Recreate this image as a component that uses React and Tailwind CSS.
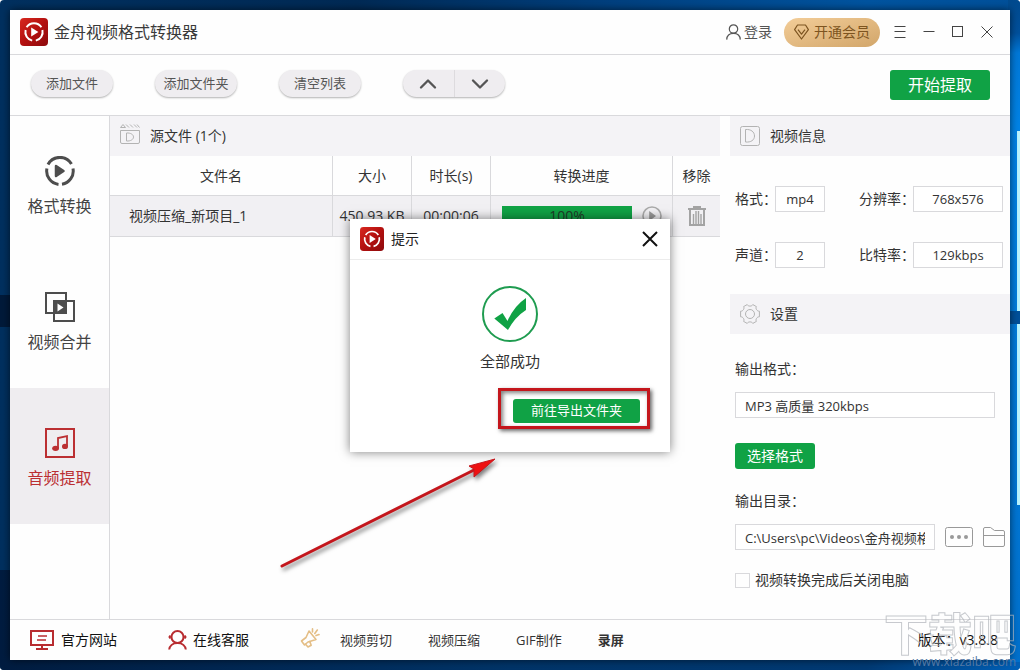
import { useState } from "react";
import { ChevronUp, ChevronDown } from "lucide-react";

const files = [
  { id: 1, name: "视频压缩_新项目_1", size: "450.93 KB", duration: "00:00:06", progress: 100 },
];

const Logo = ({ className }) => (
  <svg viewBox="0 0 28 28" className={className} aria-hidden="true">
    <defs>
      <linearGradient id="logo-bg" x1="0" y1="0" x2="1" y2="1">
        <stop offset="0" stopColor="#d8281f" />
        <stop offset="0.5" stopColor="#b3100f" />
        <stop offset="1" stopColor="#8c0a0d" />
      </linearGradient>
    </defs>
    <rect width="28" height="28" rx="4" fill="url(#logo-bg)" />
    <g fill="none" stroke="#fff" strokeWidth="2">
      <path d="M6.6 9.3A8.8 8.8 0 0 1 21.4 9.3" />
      <path d="M22.4 12A8.8 8.8 0 0 1 15.8 22.6" />
      <path d="M12.2 22.6A8.8 8.8 0 0 1 5.6 12" />
    </g>
    <path d="M11.2 9.4L18.4 14L11.2 18.6Z" fill="#fff" />
  </svg>
);

const ConvertIcon = () => (
  <svg width="30" height="30" viewBox="0 0 30 30" fill="none" stroke="#4d4d4d" strokeWidth="3" aria-hidden="true">
    <path d="M3 8.5A13.5 13.5 0 0 1 26.5 8" />
    <path d="M28 12.5A13.5 13.5 0 0 1 17 28.3" />
    <path d="M13.5 28.4A13.5 13.5 0 0 1 1.9 12.5" />
    <path d="M11 10L18.5 15L11 20Z" fill="#4d4d4d" strokeWidth="2.5" strokeLinejoin="round" />
  </svg>
);

const MergeIcon = () => (
  <svg width="30" height="30" viewBox="0 0 30 30" aria-hidden="true">
    <rect x="1" y="1" width="20" height="20" fill="none" stroke="#4d4d4d" strokeWidth="2" />
    <rect x="9" y="9" width="20" height="20" fill="none" stroke="#4d4d4d" strokeWidth="2" />
    <rect x="9" y="9" width="13" height="13" fill="#4d4d4d" />
    <path d="M12.5 11.5L18.5 15.5L12.5 19.5Z" fill="#fff" />
  </svg>
);

const MusicIcon = () => (
  <svg width="30" height="30" viewBox="0 0 30 30" aria-hidden="true">
    <rect x="1" y="1" width="28" height="28" fill="none" stroke="#bb2f32" strokeWidth="2" />
    <path d="M13 20V10L22 8.2V18" fill="none" stroke="#bb2f32" strokeWidth="1.8" />
    <ellipse cx="10.6" cy="20.3" rx="3.4" ry="2.6" fill="#bb2f32" />
    <ellipse cx="20" cy="18.4" rx="3" ry="2.6" fill="#bb2f32" />
  </svg>
);

const tabs = [
  { key: "convert", label: "格式转换", icon: <ConvertIcon /> },
  { key: "merge", label: "视频合并", icon: <MergeIcon /> },
  { key: "audio", label: "音频提取", icon: <MusicIcon /> },
];

const Wallpaper = () => (
  <svg
    className="absolute inset-0 w-full h-full"
    viewBox="0 0 1020 670"
    preserveAspectRatio="none"
    aria-hidden="true"
  >
    <defs>
      <linearGradient id="sky" x1="0" y1="0" x2="1" y2="0">
        <stop offset="0" stopColor="#00305f" />
        <stop offset="0.35" stopColor="#002a55" />
        <stop offset="0.6" stopColor="#00407f" />
        <stop offset="0.85" stopColor="#0054a0" />
        <stop offset="1" stopColor="#00509a" />
      </linearGradient>
      <linearGradient id="ground" x1="0" y1="0" x2="1" y2="0">
        <stop offset="0" stopColor="#001c40" />
        <stop offset="0.5" stopColor="#003468" />
        <stop offset="0.85" stopColor="#003a74" />
        <stop offset="1" stopColor="#0060b8" />
      </linearGradient>
      <linearGradient id="edge" x1="0" y1="0" x2="0" y2="1">
        <stop offset="0" stopColor="#004a8e" />
        <stop offset="0.05" stopColor="#00509c" />
        <stop offset="0.08" stopColor="#0078d8" />
        <stop offset="0.19" stopColor="#0083e6" />
        <stop offset="1" stopColor="#0070cc" />
      </linearGradient>
    </defs>
    <rect width="1020" height="670" fill="url(#sky)" />
    <rect y="295" width="12" height="32" fill="#001a3a" />
    <rect y="570" width="1020" height="100" fill="url(#ground)" />
    <rect x="1008" y="0" width="12" height="662" fill="url(#edge)" />
    <rect x="1017" y="131" width="3" height="180" fill="#b9f4ff" />
    <rect x="1017" y="324" width="3" height="181" fill="#b9f4ff" />
    <rect x="1008" y="311" width="12" height="13" fill="#00509a" />
  </svg>
);

const TitleBar = () => (
  <header className="flex items-center h-[45px] pl-[10px] pr-[17px] border-b border-[#d9d9dc]">
    <Logo className="w-7 h-7" />
    <h1 className="ml-[6px] text-base text-[#3a3a3a]">金舟视频格式转换器</h1>
    <div className="flex items-center ml-auto text-[#555]">
      <button className="flex items-center gap-[3px] text-sm">
        <svg width="15" height="16" viewBox="0 0 15 16" fill="none" stroke="#555" strokeWidth="1.2" aria-hidden="true">
          <circle cx="7.5" cy="5" r="4.2" />
          <path d="M0.7 15.6C0.9 11.8 3.4 9.4 7.5 9.4S14.1 11.8 14.3 15.6" />
        </svg>
        登录
      </button>
      <button className="flex items-center gap-[5px] ml-3 h-[29px] px-[10px] rounded-full bg-linear-to-br from-[#f3cd98] to-[#d2a66a] text-sm text-[#7d5420]">
        <svg width="15" height="16" viewBox="0 0 15 16" fill="none" stroke="#7d5420" strokeWidth="1.2" strokeLinejoin="round" aria-hidden="true">
          <path d="M3.5 1H11.5L14.4 5.6L7.5 15L0.6 5.6Z" />
          <path d="M4 5.6L7.5 10.2L11 5.6" />
        </svg>
        开通会员
      </button>
      <div className="flex items-center gap-[17px] ml-[14px]">
        <button aria-label="菜单">
          <svg width="12" height="12" viewBox="0 0 12 12" stroke="#444" className="block">
            <path d="M0.5 0.5H11.5M0.5 5.5H11.5M0.5 11.5H11.5" />
          </svg>
        </button>
        <button aria-label="最小化">
          <svg width="12" height="12" viewBox="0 0 12 12" stroke="#444" className="block">
            <path d="M0.5 5.5H11.5" />
          </svg>
        </button>
        <button aria-label="最大化">
          <svg width="12" height="12" viewBox="0 0 12 12" fill="none" stroke="#444" className="block">
            <rect x="0.5" y="0.5" width="10" height="10" />
          </svg>
        </button>
        <button aria-label="关闭">
          <svg width="12" height="12" viewBox="0 0 12 12" stroke="#444" className="block">
            <path d="M0.5 0.5L11.5 11.5M11.5 0.5L0.5 11.5" />
          </svg>
        </button>
      </div>
    </div>
  </header>
);

const PillButton = ({ children }) => (
  <button className="w-[82px] h-[27px] rounded-full bg-[#efedf0] text-[13px] text-[#555] shadow-[0_1px_2px_rgba(0,0,0,0.3)]">
    {children}
  </button>
);

const Toolbar = () => (
  <div className="flex items-start justify-between h-[61px] pt-[15px] pl-[21px] pr-5 border-b border-[#d9d9dc]">
    <div className="flex gap-[42px]">
      <PillButton>添加文件</PillButton>
      <PillButton>添加文件夹</PillButton>
      <PillButton>清空列表</PillButton>
      <div className="flex w-[102px] h-[27px] rounded-full overflow-hidden bg-[#efedf0] text-[#555] shadow-[0_1px_2px_rgba(0,0,0,0.3)]">
        <button className="flex-1 flex items-center justify-center border-r border-[#dddbde]" aria-label="上移">
          <ChevronUp size={28} strokeWidth={2} />
        </button>
        <button className="flex-1 flex items-center justify-center" aria-label="下移">
          <ChevronDown size={28} strokeWidth={2} />
        </button>
      </div>
    </div>
    <button className="w-[100px] h-[30px] rounded-[3px] bg-[#10a245] text-base text-white">开始提取</button>
  </div>
);

const Sidebar = () => {
  const [active, setActive] = useState("audio");

  return (
    <nav className="w-[100px] shrink-0 border-r border-[#d9d9dc]">
      {tabs.map((tab) => (
        <button
          key={tab.key}
          onClick={() => setActive(tab.key)}
          className={
            active === tab.key
              ? "flex flex-col items-center w-full h-[136px] pt-10 gap-2 bg-[#efedf0] text-base text-[#bb2f32]"
              : "flex flex-col items-center w-full h-[136px] pt-10 gap-2 text-base text-[#444]"
          }
        >
          {tab.icon}
          {tab.label}
        </button>
      ))}
    </nav>
  );
};

const PanelHeader = ({ icon, children }) => (
  <h2 className="flex items-center gap-[10px] h-10 px-[10px] bg-[#f4f3f6] text-sm text-[#333]">
    {icon}
    {children}
  </h2>
);

const FileTable = () => (
  <table className="w-full table-fixed border-separate border-spacing-0 text-sm text-[#333]">
    <colgroup>
      <col />
      <col className="w-[79px]" />
      <col className="w-[79px]" />
      <col className="w-[182px]" />
      <col className="w-[47px]" />
    </colgroup>
    <thead>
      <tr className="h-10">
        <th className="font-normal border-r border-b border-[#d9d9dc]">文件名</th>
        <th className="font-normal border-r border-b border-[#d9d9dc]">大小</th>
        <th className="font-normal border-r border-b border-[#d9d9dc]">时长(s)</th>
        <th className="font-normal border-r border-b border-[#d9d9dc]">转换进度</th>
        <th className="font-normal border-b border-[#d9d9dc]">移除</th>
      </tr>
    </thead>
    <tbody>
      {files.map((file) => (
        <tr key={file.id} className="h-[41px] bg-[#f1f0f3]">
          <td className="pl-[19px] border-r border-b border-[#d9d9dc]">{file.name}</td>
          <td className="text-center whitespace-nowrap border-r border-b border-[#d9d9dc]">{file.size}</td>
          <td className="text-center border-r border-b border-[#d9d9dc]">{file.duration}</td>
          <td className="pl-[11px] pr-[10px] border-r border-b border-[#d9d9dc]">
            <div className="flex items-center gap-[10px]">
              <div className="flex-1 h-5 bg-[#dcdcdc]">
                <div
                  className="h-5 leading-5 text-center bg-[#10a245] text-[#1f3a28]"
                  style={{ width: `${file.progress}%` }}
                >
                  {file.progress}%
                </div>
              </div>
              <button aria-label="播放">
                <svg width="20" height="20" viewBox="0 0 20 20" className="block">
                  <circle cx="10" cy="10" r="9" fill="none" stroke="#aaa" strokeWidth="1.6" />
                  <path d="M7.2 5L14 10L7.2 15Z" fill="#999" />
                </svg>
              </button>
            </div>
          </td>
          <td className="border-b border-[#d9d9dc]">
            <button className="block mx-auto" aria-label="移除">
              <svg width="18" height="20" viewBox="0 0 18 20" fill="none" stroke="#a3a3a3" className="block">
                <path d="M0 3H18" strokeWidth="2" />
                <path d="M5 1H13" strokeWidth="2" />
                <path d="M2 3V19H16V3" strokeWidth="2" />
                <path d="M5.5 8V18M8 5V18M10.5 5V18M13 8V18" strokeWidth="1.4" />
              </svg>
            </button>
          </td>
        </tr>
      ))}
    </tbody>
  </table>
);

const InfoField = ({ id, label, value, labelClass, boxClass }) => (
  <div className="flex items-center">
    <label htmlFor={id} className={`${labelClass} shrink-0 whitespace-nowrap`}>{label}：</label>
    <input
      id={id}
      readOnly
      defaultValue={value}
      className={`${boxClass} h-[26px] bg-white border border-[#d9d9dc] text-center text-[13px] outline-none`}
    />
  </div>
);

const SettingsPanel = () => (
  <aside className="w-[280px] shrink-0 text-sm text-[#333]">
    <PanelHeader
      icon={
        <svg width="20" height="20" viewBox="0 0 20 20" fill="none" stroke="#b3b3b3" aria-hidden="true">
          <rect x="0.5" y="0.5" width="19" height="19" rx="2" />
          <path d="M5.5 3.5V16C11 16.5 14.5 14 14.5 10S11 3 5.5 3.5Z" />
        </svg>
      }
    >
      视频信息
    </PanelHeader>
    <div className="grid grid-cols-[124px_1fr] gap-y-[30px] pt-[30px] pb-[26px] pl-[5px]">
      <InfoField id="format" label="格式" value="mp4" labelClass="w-10" boxClass="w-[50px]" />
      <InfoField id="resolution" label="分辨率" value="768x576" labelClass="w-[54px]" boxClass="w-[90px]" />
      <InfoField id="channels" label="声道" value="2" labelClass="w-10" boxClass="w-[50px]" />
      <InfoField id="bitrate" label="比特率" value="129kbps" labelClass="w-[54px]" boxClass="w-[90px]" />
    </div>
    <PanelHeader
      icon={
        <svg width="20" height="20" viewBox="0 0 20 20" fill="none" stroke="#b3b3b3" strokeLinejoin="round" aria-hidden="true">
          <path d="M7.2 0.6C8 2.6 12 2.6 12.8 0.6L16.4 2.6C15.2 4.4 17 7.4 19.4 7.2V12.8C17 12.6 15.2 15.6 16.4 17.4L12.8 19.4C12 17.4 8 17.4 7.2 19.4L3.6 17.4C4.8 15.6 3 12.6 0.6 12.8V7.2C3 7.4 4.8 4.4 3.6 2.6Z" />
          <circle cx="10" cy="10" r="4.5" />
        </svg>
      }
    >
      设置
    </PanelHeader>
    <div className="flex flex-col items-start pt-[25px] pl-[5px]">
      <label htmlFor="output-format">输出格式：</label>
      <input
        id="output-format"
        readOnly
        defaultValue="MP3 高质量 320kbps"
        className="w-[260px] h-[26px] mt-[13px] px-[9px] bg-white border border-[#d9d9dc] text-[13px] outline-none"
      />
      <button className="w-20 h-[26px] mt-[25px] rounded-[3px] bg-[#10a245] text-white">选择格式</button>
      <label htmlFor="output-dir" className="mt-[22px]">输出目录：</label>
      <div className="flex items-center mt-[13px] gap-[10px]">
        <input
          id="output-dir"
          readOnly
          defaultValue="C:\Users\pc\Videos\金舟视频格式转换器"
          className="w-[200px] h-[26px] px-[9px] bg-white border border-[#d9d9dc] text-[13px] outline-none"
        />
        <button aria-label="浏览">
          <svg width="28" height="20" viewBox="0 0 28 20" className="block">
            <rect x="0.5" y="0.5" width="27" height="19" rx="2" fill="none" stroke="#999" />
            <circle cx="7" cy="10" r="2" fill="#999" />
            <circle cx="14" cy="10" r="2" fill="#999" />
            <circle cx="21" cy="10" r="2" fill="#999" />
          </svg>
        </button>
        <button aria-label="打开文件夹">
          <svg width="22" height="20" viewBox="0 0 22 20" fill="none" stroke="#999" className="block">
            <path d="M0.5 18V2Q0.5 0.5 2 0.5H7.5L11.5 3.5H20Q21.5 3.5 21.5 5V18Q21.5 19.5 20 19.5H2Q0.5 19.5 0.5 18ZM0.5 8.5H21.5" />
          </svg>
        </button>
      </div>
      <div className="flex items-center mt-5 gap-[5px]">
        <input id="shutdown" type="checkbox" className="appearance-none w-[15px] h-[15px] border border-[#d9d9dc] checked:bg-[#10a245]" />
        <label htmlFor="shutdown">视频转换完成后关闭电脑</label>
      </div>
    </div>
  </aside>
);

const Footer = () => (
  <footer className="flex items-center h-[41px] px-5 pr-3 border-t border-[#d9d9dc] text-sm text-[#111]">
    <a href="#" className="flex items-center gap-[7px]">
      <svg width="24" height="20" viewBox="0 0 24 20" fill="none" stroke="#b82c30" strokeWidth="2" aria-hidden="true">
        <rect x="1" y="1" width="22" height="14" />
        <path d="M8 6H17M7 10H16" strokeWidth="1.6" />
        <path d="M12 15V18M6 19H18" />
      </svg>
      官方网站
    </a>
    <a href="#" className="flex items-center gap-[6px] ml-[51px]">
      <svg width="19" height="20" viewBox="0 0 19 20" fill="none" stroke="#b82c30" strokeWidth="2" aria-hidden="true">
        <circle cx="9.5" cy="7" r="6" />
        <path d="M1.2 19.5C1.6 16 4.6 13 9.5 13S17.4 16 17.8 19.5" />
        <path d="M2.5 5.5L1.5 7L2.5 8.5M16.5 5.5L17.5 7L16.5 8.5" />
      </svg>
      在线客服
    </a>
    <div className="flex items-center ml-[51px] text-[13px] text-[#333]">
      <svg width="20" height="20" viewBox="0 0 20 20" className="mb-1" fill="none" stroke="#e4be86" strokeWidth="1.6" strokeLinecap="round" strokeLinejoin="round" aria-hidden="true">
        <path d="M9 3L16 11.5L8 14L4.5 17L1.5 13L6 9.5Z" />
        <path d="M5.5 16.2L8 19L11.2 17.2L9.8 13.6" />
        <path d="M12.5 4V0.9M14.8 5.5L17.3 2M16 7.6L19 6.6" />
      </svg>
      <a href="#" className="ml-5">视频剪切</a>
      <a href="#" className="ml-9">视频压缩</a>
      <a href="#" className="ml-9">GIF制作</a>
      <a href="#" className="ml-9 font-bold">录屏</a>
    </div>
    <p className="ml-auto">版本：v3.8.8</p>
  </footer>
);

const ResultDialog = () => (
  <div className="absolute inset-0 flex items-center justify-center pt-px">
    <div role="dialog" aria-labelledby="dialog-title" className="w-80 bg-white shadow-[0_0_10px_rgba(0,0,0,0.5)]">
      <div className="flex items-center h-[41px] pl-[10px] pr-3 border-b border-[#ececec]">
        <Logo className="w-6 h-6" />
        <h2 id="dialog-title" className="ml-[7px] text-sm text-[#222]">提示</h2>
        <button className="ml-auto" aria-label="关闭">
          <svg width="16" height="16" viewBox="0 0 16 16" stroke="#111" strokeWidth="2" className="block">
            <path d="M1 1L15 15M15 1L1 15" />
          </svg>
        </button>
      </div>
      <div className="flex flex-col items-center pt-[26px] pb-[29px]">
        <svg width="56" height="56" viewBox="0 0 56 56" aria-hidden="true">
          <circle cx="28" cy="28" r="27" fill="none" stroke="#1f9c50" strokeWidth="2" />
          <path d="M12.3 32.5L20.5 27L25.5 35Q32 20 44 12V24Q33 31 26 44Z" fill="#10a245" />
        </svg>
        <p className="mt-[7px] leading-6 text-[15px] text-[#333]">全部成功</p>
        <div className="relative self-end mt-[26px] mr-[30px]">
          <button className="block w-[127px] h-6 rounded-[3px] bg-[#10a245] text-[13px] text-white">前往导出文件夹</button>
          <div className="absolute -left-[15px] -right-[10px] -top-[11px] -bottom-[6px] border-[3px] border-[#c4161c] pointer-events-none shadow-[2px_2px_4px_rgba(0,0,0,0.6),inset_2px_2px_4px_rgba(0,0,0,0.5)]" />
        </div>
      </div>
    </div>
  </div>
);

const Arrow = () => (
  <svg
    width="230"
    height="130"
    viewBox="0 0 230 130"
    className="absolute left-[270px] top-[450px] pointer-events-none drop-shadow-[2px_3px_2px_rgba(0,0,0,0.5)]"
    aria-hidden="true"
  >
    <path d="M12 116L206 19" stroke="#c4161c" strokeWidth="3" strokeLinecap="round" />
    <path d="M225 9L199 16L204 19L204 27Z" fill="#ee1111" stroke="#c4161c" />
  </svg>
);

const Watermark = () => (
  <div className="absolute right-1 bottom-0 flex flex-col items-end pointer-events-none">
    <span className="text-[44px] leading-10 font-black text-transparent opacity-70 [-webkit-text-stroke:1px_#b0b4ba]">下载吧</span>
    <span className="text-xs leading-4 text-[#5479a5]">www.xiazaiba.com</span>
  </div>
);

export default function App() {
  return (
    <div className="relative flex min-h-screen p-[10px] rounded overflow-hidden font-['Open_Sans','Noto_Sans_CJK_SC',sans-serif]">
      <Wallpaper />
      <div className="relative flex flex-col flex-1 bg-[#fefefe] shadow-[0_0_8px_rgba(0,0,0,0.6)]">
        <TitleBar />
        <Toolbar />
        <div className="flex flex-1">
          <Sidebar />
          <main className="flex-1 mr-[10px]">
            <PanelHeader
              icon={
                <svg width="20" height="20" viewBox="0 0 20 20" fill="none" stroke="#b3b3b3" className="mb-1" aria-hidden="true">
                  <path d="M0.5 3.5L3 0.5L5.5 3.5ZM6 0.5L9 3.5M10 0.5L13 3.5M14 0.5L17 3.5M17 0.5L19.5 3.5" />
                  <path d="M0.5 6.5H19.5V18Q19.5 19.5 18 19.5H2Q0.5 19.5 0.5 18Z" />
                  <path d="M6.5 9V17C10.5 17.3 13.5 15.5 13.5 13S10.5 8.7 6.5 9Z" />
                </svg>
              }
            >
              源文件 (1个)
            </PanelHeader>
            <FileTable />
          </main>
          <SettingsPanel />
        </div>
        <Footer />
      </div>
      <ResultDialog />
      <Arrow />
      <Watermark />
    </div>
  );
}
